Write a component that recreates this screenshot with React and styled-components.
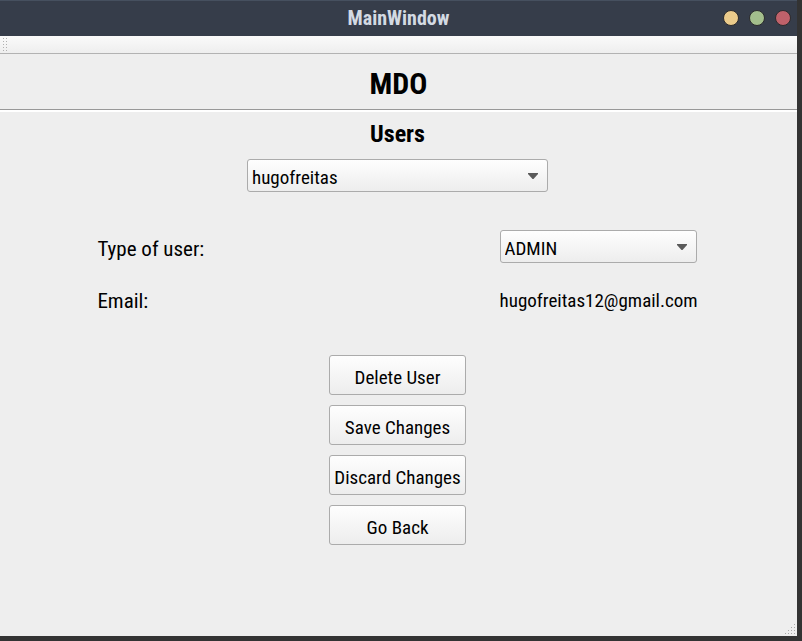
import React, { useState } from "react";
import styled, { createGlobalStyle } from "styled-components";

const GlobalStyle = createGlobalStyle`
  * { box-sizing: border-box; }
  body {
    margin: 0;
    background: #333333;
    color: #000000;
    font-family: "Roboto Condensed", "Liberation Sans Narrow", Roboto, sans-serif;
  }
`;

const Desktop = styled.div`
  display: flex;
  min-height: 100vh;
  padding: 0 5px 5px 0;
`;

const Window = styled.div`
  flex: 1;
  display: flex;
  flex-direction: column;
  background: #eeeeee;
`;

const TitleBar = styled.header`
  display: grid;
  grid-template-columns: 1fr auto 1fr;
  align-items: center;
  height: 36px;
  padding-right: 6px;
  background: #363d4a;
  box-shadow: inset 0 1px 0 #46505f;
`;

const WindowTitle = styled.span`
  grid-column: 2;
  padding-left: 6px;
  color: #d3dae3;
  font-size: 20px;
  font-weight: 700;
  line-height: 24px;
`;

const WindowControls = styled.div`
  display: flex;
  justify-content: flex-end;
  gap: 10px;
`;

const ControlDot = styled.button`
  width: 16px;
  height: 16px;
  padding: 0;
  border: 1px solid #2b2a2c;
  border-radius: 50%;
  background: ${({ $color }) => $color};
`;

const ToolBar = styled.div`
  height: 18px;
  padding: 1px 0 0 2px;
  border-bottom: 1px solid #b2b2b2;
  background: linear-gradient(#fafafa, #eeeeee);
`;

const Banner = styled.div`
  padding: 12px 0 7px;
  border-bottom: 1px solid #989898;
  box-shadow: 0 2px 0 #ffffff;
  text-align: center;
`;

const AppName = styled.h1`
  margin: 0;
  font-size: 30px;
  line-height: 36px;
`;

const Content = styled.main`
  flex: 1;
  display: flex;
  flex-direction: column;
  align-items: center;
  padding: 9px 2px 0 0;
`;

const Heading = styled.h2`
  margin: 0 0 10px;
  font-size: 24px;
  line-height: 30px;
`;

const SelectBox = styled.div`
  display: grid;
  align-items: center;
  width: ${({ $width }) => $width}px;

  & > * { grid-area: 1 / 1; }
`;

const Select = styled.select`
  appearance: none;
  width: 100%;
  height: 33px;
  padding: 3px 28px 0 4px;
  border: 1px solid #ababab;
  border-radius: 3px;
  background: linear-gradient(#fefefe, #ededed);
  color: #000000;
  font-family: inherit;
  font-size: 19px;
`;

const ArrowIcon = styled.svg`
  justify-self: end;
  margin-right: 10px;
  pointer-events: none;
`;

const Fields = styled.div`
  display: grid;
  grid-template-columns: 1fr auto;
  align-items: center;
  row-gap: 20px;
  width: 75.5%;
  margin-top: 38px;
`;

const Label = styled.label`
  padding-top: 4px;
  font-size: 21px;
  line-height: 28px;
`;

const Email = styled.output`
  padding-top: 4px;
  font-size: 19px;
  line-height: 28px;
  text-align: right;
`;

const Actions = styled.div`
  display: grid;
  gap: 10px;
  margin-top: 40px;
`;

const ActionButton = styled.button`
  height: 40px;
  min-width: 137px;
  padding: 4px 4px 0;
  border: 1px solid #ababab;
  border-radius: 3px;
  background: linear-gradient(#fefefe, #ededed);
  color: #000000;
  font-family: inherit;
  font-size: 19px;
`;

const StatusBar = styled.footer`
  display: flex;
  justify-content: flex-end;
`;

const controls = [
  { name: "Minimize", color: "#ebcb8b" },
  { name: "Maximize", color: "#a3be8c" },
  { name: "Close", color: "#bf616a" },
];

const actions = ["Delete User", "Save Changes", "Discard Changes", "Go Back"];

const handleRows = [1, 4, 7, 10, 13];

const gripDots = [
  [9, 0], [6, 3], [9, 3], [3, 6], [6, 6], [9, 6], [0, 9], [3, 9], [6, 9], [9, 9],
];

function Dropdown({ id, label, width, options }) {
  const [value, setValue] = useState(options[0]);
  return (
    <SelectBox $width={width}>
      <Select id={id} aria-label={label} value={value} onChange={(e) => setValue(e.target.value)}>
        {options.map((option) => (
          <option key={option}>{option}</option>
        ))}
      </Select>
      <ArrowIcon width="10" height="6" viewBox="0 0 10 6" aria-hidden="true">
        <path d="M0 0h10v1L5.5 6h-1L0 1z" fill="#5a5a5a" />
      </ArrowIcon>
    </SelectBox>
  );
}

export default function App() {
  return (
    <Desktop>
      <GlobalStyle />
      <Window>
        <TitleBar>
          <WindowTitle>MainWindow</WindowTitle>
          <WindowControls>
            {controls.map(({ name, color }) => (
              <ControlDot key={name} type="button" aria-label={name} $color={color} />
            ))}
          </WindowControls>
        </TitleBar>
        <ToolBar>
          <svg width="6" height="16" viewBox="0 0 6 16" aria-hidden="true">
            {handleRows.map((y) => (
              <path key={y} d={`M1 ${y}h1v1h-1zM4 ${y}h1v1h-1z`} fill="#b0b0b0" />
            ))}
          </svg>
        </ToolBar>
        <Banner>
          <AppName>MDO</AppName>
        </Banner>
        <Content>
          <Heading>Users</Heading>
          <Dropdown label="User" width={301} options={["hugofreitas"]} />
          <Fields>
            <Label htmlFor="user-type">Type of user:</Label>
            <Dropdown id="user-type" width={197} options={["ADMIN"]} />
            <Label htmlFor="email">Email:</Label>
            <Email id="email">hugofreitas12@gmail.com</Email>
          </Fields>
          <Actions>
            {actions.map((action) => (
              <ActionButton key={action} type="button">{action}</ActionButton>
            ))}
          </Actions>
        </Content>
        <StatusBar>
          <svg width="13" height="13" viewBox="0 0 13 13" aria-hidden="true">
            {gripDots.map(([x, y]) => (
              <rect key={`${x}-${y}`} x={x + 1} y={y + 1} width="1" height="1" fill="#a8a8a8" />
            ))}
          </svg>
        </StatusBar>
      </Window>
    </Desktop>
  );
}
